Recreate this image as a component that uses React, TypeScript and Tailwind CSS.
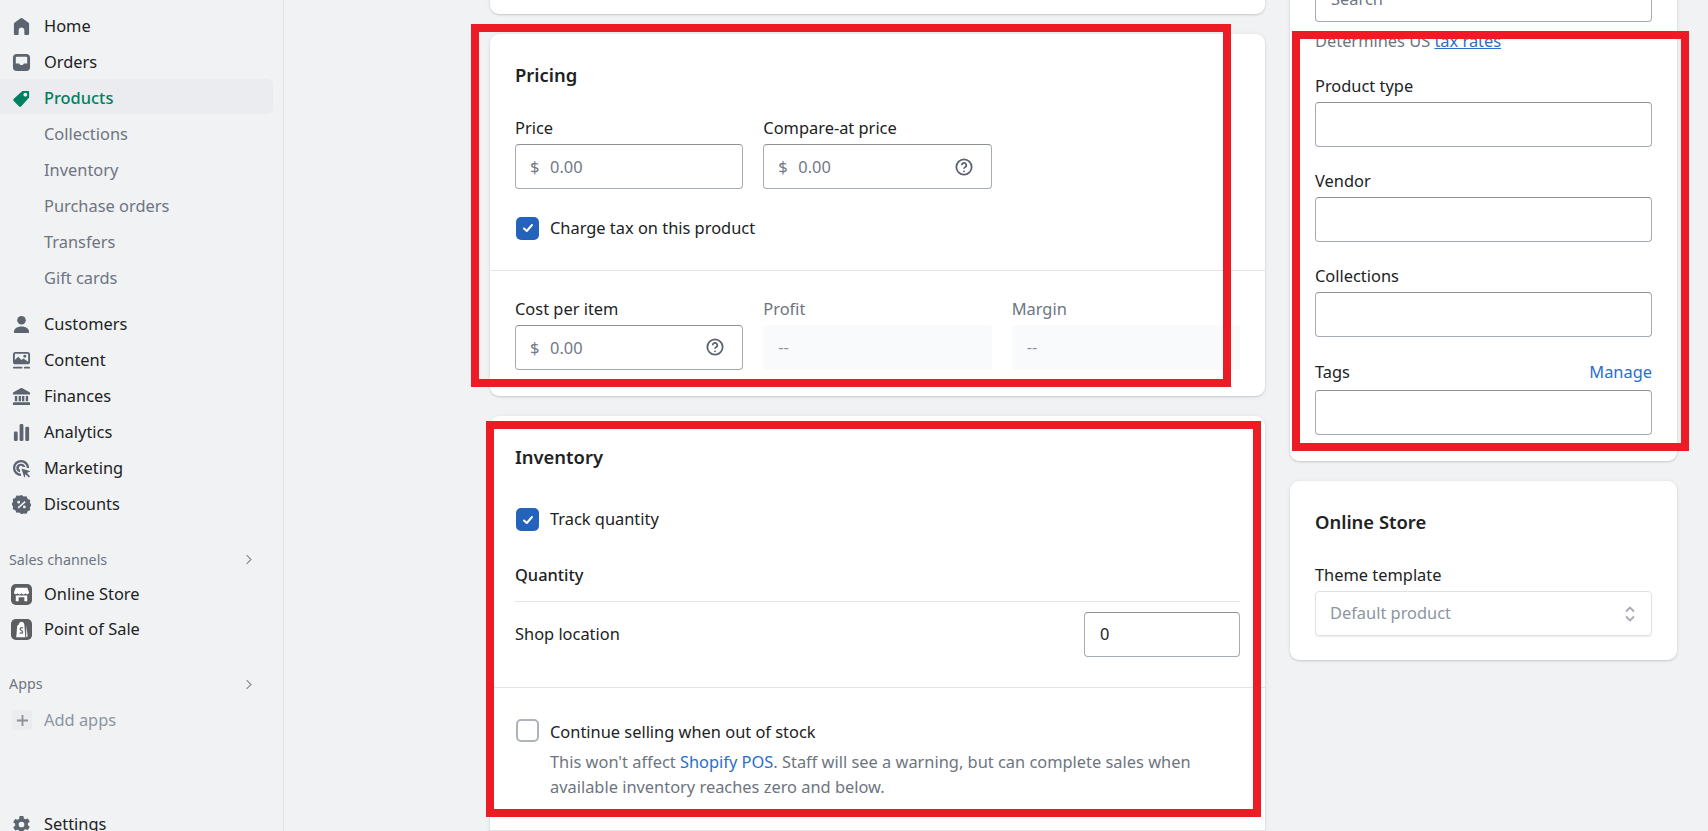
import React from 'react';

const Ico = ({ children, className = 'text-[#5c6470]' }: { children: React.ReactNode; className?: string }) => (
  <svg viewBox="0 0 20 20" fill="currentColor" className={`w-[19px] h-[19px] ${className}`}>
    {children}
  </svg>
);

const icons: Record<string, React.ReactNode> = {
  home: <path d="M18 7.3v10.2c0 .8-.7 1.500-1.500 1.500h-2.400c-.6 0-1.100-.5-1.100-1.100V14c0-1.700-1.300-3-3-3s-3 1.300-3 3v3.900c0 .6-.5 1.100-1.100 1.100H3.500C2.700 19 2 18.300 2 17.500V7.300c0-.5.200-.9.600-1.200L9.100 1.300a1.500 1.500 0 0 1 1.800 0l6.500 4.800c.4.300.6.700.6 1.200z" />,
  orders: <path fillRule="evenodd" d="M5 1h10a4 4 0 0 1 4 4v10a4 4 0 0 1-4 4H5a4 4 0 0 1-4-4V5a4 4 0 0 1 4-4zm-1 10h3.200c.3 0 .6.200.7.500l.3.700c.1.300.4.500.7.500h2.200c.3 0 .6-.2.700-.5l.3-.7c.1-.3.400-.5.700-.5H16V5c0-.6-.4-1-1-1H5c-.6 0-1 .4-1 1v6z" />,
  products: <path fillRule="evenodd" d="M18 2.500V9L9.800 18.200c-.6.700-1.600.7-2.200.1l-5.800-5.800c-.6-.6-.6-1.600.1-2.200L11 2h6.500c.3 0 .5.200.5.500zM14 8a2 2 0 1 0 0-4 2 2 0 0 0 0 4z" />,
  customers: (
    <>
      <circle cx="10" cy="5.500" r="4.500" />
      <path d="M2 18c0-3.800 3.500-6 8-6s8 2.200 8 6c0 .6-.4 1-1 1H3c-.6 0-1-.4-1-1z" />
    </>
  ),
  content: (
    <>
      <path fillRule="evenodd" d="M3.500 1h13C17.900 1 19 2.100 19 3.500v8c0 1.400-1.100 2.500-2.500 2.500h-13C2.100 14 1 12.900 1 11.500v-8C1 2.100 2.100 1 3.500 1zM3 9.500 6.500 6l3.500 3.500 2-1.500 5 3.200V3.500c0-.3-.2-.5-.5-.5h-13c-.3 0-.5.200-.5.500v6z" />
      <circle cx="13.500" cy="5.500" r="1.500" />
      <rect x="1" y="16.500" width="10" height="2" rx="1" />
      <rect x="12.500" y="16.500" width="6.500" height="2" rx="1" />
    </>
  ),
  finances: <path fillRule="evenodd" d="M9.500 1.100a1 1 0 0 1 1 0l8 4.300c.3.200.5.500.5.900V8H1V6.300c0-.4.200-.7.500-.9l8-4.300zM3 9.500h2.500V15H3V9.500zm4 0h2.500V15H7V9.500zm3.500 0H13V15h-2.500V9.500zm4 0H17V15h-2.500V9.500zM2 16h16c.6 0 1 .4 1 1v2H1v-2c0-.6.400-1 1-1z" />,
  analytics: (
    <>
      <rect x="2" y="9" width="4" height="10" rx="1.500" />
      <rect x="8" y="1" width="4" height="18" rx="1.500" />
      <rect x="14" y="4" width="4" height="15" rx="1.500" />
    </>
  ),
  marketing: (
    <>
      <path d="M9.500 1a8.500 8.500 0 0 1 8.500 8.500h-2.400a6.100 6.100 0 1 0-6.100 6.100V18a8.500 8.500 0 0 1 0-17z" />
      <path d="M9.500 5a4.500 4.500 0 0 1 4.400 3.500h-2.500a2.200 2.200 0 1 0-2.900 2.900V14A4.500 4.500 0 0 1 9.500 5z" />
      <path d="M10 10l9.500 3-3.800 1.700 3.300 3.400-1.300 1.300-3.400-3.300L13 20z" />
    </>
  ),
  discounts: <path fillRule="evenodd" d="M10 0l2.400 1.700 2.900-.3 1.200 2.700 2.700 1.200-.3 2.900L20.600 10.600l-1.700 2.400.3 2.900-2.700 1.200-1.200 2.700-2.900-.3L10 20.200l-2.400-1.700-2.900.3-1.200-2.700L.8 14.900l.3-2.900L-.6 9.600l1.700-2.400-.3-2.900 2.700-1.200L4.700 .4l2.900.3L10 0zM7 6a1.500 1.500 0 1 0 0 3 1.500 1.500 0 0 0 0-3zm6 5a1.500 1.500 0 1 0 0 3 1.500 1.500 0 0 0 0-3zm.3-4.700L6 13l1 1.200L14.400 7.500l-1.100-1.200z" />,
  settings: <path fillRule="evenodd" d="M8 1h4l.5 2.600 1.700.9 2.500-.9 2 3.500-2 1.700v1.900l2 1.700-2 3.500-2.500-.9-1.700.9L12 19H8l-.5-2.600-1.700-.9-2.500.9-2-3.500 2-1.700V9.300l-2-1.700 2-3.500 2.500.9 1.700-.9L8 1zm2 6a3 3 0 1 0 0 6 3 3 0 0 0 0-6z" />,
};

const Row = ({ icon, label, active }: { icon: string; label: string; active?: boolean }) => (
  <div className={`flex items-center mr-[10px] rounded-r-md ${active ? 'bg-[#ebecef] h-[35px] -mt-px mb-[2px] pt-[3px]' : 'h-9'}`}>
    <span className="w-[44px] pl-3 flex-none">
      <Ico className={active ? 'text-[#008060]' : 'text-[#5c6470]'}>{icons[icon]}</Ico>
    </span>
    <span className={active ? 'text-[#008060] font-medium' : 'text-[#202223]'}>{label}</span>
  </div>
);

const SubRow = ({ label }: { label: string }) => (
  <div className="flex items-center h-9 pl-[44px] text-[#6d7580]">{label}</div>
);

const SectionHead = ({ label, className }: { label: string; className: string }) => (
  <div className={`flex items-center justify-between h-9 pl-[9px] pr-[30px] text-[14.3px] text-[#6d7580] ${className}`}>
    <span>{label}</span>
    <svg viewBox="0 0 10 14" className="w-[8px] h-[11px] text-[#8c9196]" fill="none" stroke="currentColor" strokeWidth="1.6">
      <path d="M2 1.500 7.500 7 2 12.500" />
    </svg>
  </div>
);

const HelpIcon = () => (
  <svg viewBox="0 0 20 20" className="w-[18px] h-[18px] text-[#5c6470] flex-none" fill="none" stroke="currentColor" strokeWidth="2">
    <circle cx="10" cy="10" r="8.5" />
    <path d="M7.500 8a2.500 2.500 0 1 1 3.700 2.200c-.8.400-1.200.9-1.200 1.800" />
    <circle cx="10" cy="14.800" r=".6" fill="currentColor" strokeWidth="1" />
  </svg>
);

const Check = ({ checked = true }: { checked?: boolean }) =>
  checked ? (
    <div className="w-[23px] h-[23px] ml-px flex-none rounded-[5px] bg-[#2463bc] flex items-center justify-center">
      <svg viewBox="0 0 12 12" className="w-[12px] h-[12px]" fill="none" stroke="white" strokeWidth="2" strokeLinecap="round" strokeLinejoin="round">
        <path d="M2 6.500 4.800 9 10 3" />
      </svg>
    </div>
  ) : (
    <div className="w-[23px] h-[23px] ml-px flex-none rounded-[5px] border-2 border-[#aeb4bd] bg-white" />
  );

const box = 'h-[45px] rounded-[4px] border border-[#a6acb6] border-t-[#8c9196] bg-white';

const MoneyInput = ({ help }: { help?: boolean }) => (
  <div className={`${box} flex items-center pl-[14px] pr-[18px] text-[#717985]`}>
    <span className="w-[20px] pt-[2px]">$</span>
    <span className="flex-1 pt-[2px]">0.00</span>
    {help && <HelpIcon />}
  </div>
);

const Label = ({ children, muted }: { children: React.ReactNode; muted?: boolean }) => (
  <div className={`h-[22px] leading-[22px] mb-[5px] ${muted ? 'text-[#6d7580]' : 'text-[#202223]'}`}>{children}</div>
);

const Title = ({ children }: { children: React.ReactNode }) => (
  <h2 className="h-6 leading-6 text-[18.4px] font-semibold text-[#202223]">{children}</h2>
);

const card = 'bg-white rounded-[9px] shadow-[0_0_5px_rgba(23,24,24,0.05),0_1px_2px_rgba(0,0,0,0.15)]';

const SideField = ({ label }: { label: string }) => (
  <div className="mt-[23px]">
    <Label>{label}</Label>
    <div className={box} />
  </div>
);

export default function App() {
  return (
    <div className="relative flex h-[831px] overflow-hidden bg-[#f1f2f4] text-[16.4px] text-[#202223] font-['Noto_Sans','Open_Sans',sans-serif]">
      {/* Sidebar */}
      <aside className="w-[284px] flex-none border-r border-[#e1e3e5] pt-2">
        <Row icon="home" label="Home" />
        <Row icon="orders" label="Orders" />
        <Row icon="products" label="Products" active />
        <SubRow label="Collections" />
        <SubRow label="Inventory" />
        <SubRow label="Purchase orders" />
        <SubRow label="Transfers" />
        <SubRow label="Gift cards" />
        <div className="mt-[10px]">
          <Row icon="customers" label="Customers" />
          <Row icon="content" label="Content" />
          <Row icon="finances" label="Finances" />
          <Row icon="analytics" label="Analytics" />
          <Row icon="marketing" label="Marketing" />
          <Row icon="discounts" label="Discounts" />
        </div>
        <SectionHead label="Sales channels" className="mt-[18px] pt-[3px]" />
        <div className="flex items-center h-9">
          <span className="w-[44px] pl-[11px] flex-none">
            <svg viewBox="0 0 22 22" className="w-[21px] h-[21px]">
              <rect width="22" height="22" rx="5" fill="#5c5f62" />
              <path d="M5 4h12l2 5a2 2 0 0 1-3.700.800 2.600 2.600 0 0 1-4.300 0 2.600 2.600 0 0 1-4.300 0A2 2 0 0 1 3 9z" fill="#fff" />
              <path d="M5 12h12v6h-3v-4H8v4H5z" fill="#fff" />
            </svg>
          </span>
          <span>Online Store</span>
        </div>
        <div className="flex items-center h-[35px]">
          <span className="w-[44px] pl-[11px] flex-none">
            <svg viewBox="0 0 22 22" className="w-[21px] h-[21px]">
              <rect width="22" height="22" rx="5" fill="#5c5f62" />
              <path d="M8 6c.5-2 1.600-3 3-3s2.500 1 3 3l1 13H5.500L6.500 7z" fill="#fff" />
              <path d="M16 6.500 17.500 18l-1.500 1z" fill="#fff" />
              <path d="M12.500 9.500c-1.500-.8-3-.2-3 1 0 1.500 2.600 1.500 2.600 3 0 1.300-1.600 1.700-3 1" fill="none" stroke="#5c5f62" strokeWidth="1.3" />
            </svg>
          </span>
          <span>Point of Sale</span>
        </div>
        <SectionHead label="Apps" className="mt-[19px]" />
        <div className="flex items-center h-9 text-[#8c95a1]">
          <span className="w-[44px] pl-[12px] flex-none">
            <span className="flex items-center justify-center w-[20px] h-[20px] bg-[#ebecef] rounded-[2px]">
              <svg viewBox="0 0 14 14" className="w-[13px] h-[13px]" fill="none" stroke="#8c9196" strokeWidth="2">
                <path d="M7 1v12M1 7h12" />
              </svg>
            </span>
          </span>
          <span>Add apps</span>
        </div>
        <div className="mt-[68px]">
          <Row icon="settings" label="Settings" />
        </div>
      </aside>

      {/* Page content, scrolled */}
      <main className="flex flex-1 items-start gap-[25px] pl-[206px] -mt-[40px]">
        <div className="w-[775px] flex-none flex flex-col gap-5">
          <div className={`${card} h-[54px]`} />

          <section className={card}>
            <div className="px-[25px] pt-[29px] pb-[29px] border-b border-[#e1e3e5]">
              <Title>Pricing</Title>
              <div className="grid grid-cols-3 gap-x-5 mt-[30px]">
                <div>
                  <Label>Price</Label>
                  <MoneyInput />
                </div>
                <div>
                  <Label>Compare-at price</Label>
                  <MoneyInput help />
                </div>
              </div>
              <div className="flex items-center gap-[11px] mt-[27px]">
                <Check />
                <span>Charge tax on this product</span>
              </div>
            </div>
            <div className="grid grid-cols-3 gap-x-5 px-[25px] pt-[27px] pb-[26px]">
              <div>
                <Label>Cost per item</Label>
                <MoneyInput help />
              </div>
              <div>
                <Label muted>Profit</Label>
                <div className="h-[45px] rounded-[4px] bg-[#f9fafb] flex items-center px-[15px] text-[#8c95a1]">--</div>
              </div>
              <div>
                <Label muted>Margin</Label>
                <div className="h-[45px] rounded-[4px] bg-[#f9fafb] flex items-center px-[15px] text-[#8c95a1]">--</div>
              </div>
            </div>
          </section>

          <section className={`${card} h-[500px]`}>
            <div className="px-[25px] pt-[29px] pb-[30px] border-b border-[#e1e3e5]">
              <Title>Inventory</Title>
              <div className="flex items-center gap-[11px] mt-[39px] h-6">
                <Check />
                <span>Track quantity</span>
              </div>
              <div className="mt-[31px] pb-[13px] border-b border-[#e1e3e5] font-medium leading-6 h-[39px]">Quantity</div>
              <div className="flex items-center justify-between mt-[10px]">
                <span>Shop location</span>
                <div className={`${box} w-[156px] flex items-center px-[15px]`}>0</div>
              </div>
            </div>
            <div className="px-[25px] pt-[33px] pb-[31px] border-b border-[#e1e3e5]">
              <div className="flex gap-[11px]">
                <div className="-mt-[2px]">
                  <Check checked={false} />
                </div>
                <span className="leading-[22px]">Continue selling when out of stock</span>
              </div>
              <p className="ml-[35px] mt-[6px] w-[660px] leading-[25px] text-[#6d7580]">
                This won't affect <span className="text-[#2c6ecb]">Shopify POS</span>. Staff will see a warning, but can complete sales when available inventory reaches zero and below.
              </p>
            </div>
          </section>
        </div>

        <div className="w-[387px] flex-none flex flex-col gap-5">
          <section className={`${card} px-[25px] pt-[17px] pb-[26px]`}>
            <div className={`${box} flex items-center px-[15px] text-[#6d7580]`}>Search</div>
            <div className="mt-[8px] h-[22px] leading-[22px] text-[#6d7580]">
              Determines US <span className="text-[#2c6ecb] underline">tax rates</span>
            </div>
            <SideField label="Product type" />
            <SideField label="Vendor" />
            <SideField label="Collections" />
            <div className="mt-[24px]">
              <div className="flex justify-between h-[22px] leading-[22px] mb-[7px]">
                <span>Tags</span>
                <span className="text-[#2c6ecb]">Manage</span>
              </div>
              <div className={box} />
            </div>
          </section>

          <section className={`${card} px-[25px] pt-[29px] pb-[24px]`}>
            <Title>Online Store</Title>
            <div className="mt-[30px] h-[22px] leading-[22px] mb-[5px]">Theme template</div>
            <div className="h-[45px] rounded-[4px] border border-[#dfe1e4] shadow-[0_1px_1px_rgba(0,0,0,0.08)] flex items-center justify-between pl-[14px] pr-[15px] text-[#8c95a1]">
              <span>Default product</span>
              <svg viewBox="0 0 12 18" className="w-[12px] h-[18px] text-[#a6acb6]" fill="none" stroke="currentColor" strokeWidth="1.8">
                <path d="M2 6.500 6 2.500l4 4M2 11.500l4 4 4-4" />
              </svg>
            </div>
          </section>
        </div>
      </main>

      {/* Red annotation frames drawn over the screenshot */}
      <div className="absolute left-[471px] top-[24px] w-[760px] h-[363px] border-8 border-[#ed1c24] pointer-events-none" />
      <div className="absolute left-[486px] top-[421px] w-[775px] h-[396px] border-8 border-[#ed1c24] pointer-events-none" />
      <div className="absolute left-[1292px] top-[31px] w-[397px] h-[420px] border-8 border-[#ed1c24] pointer-events-none" />
    </div>
  );
}
